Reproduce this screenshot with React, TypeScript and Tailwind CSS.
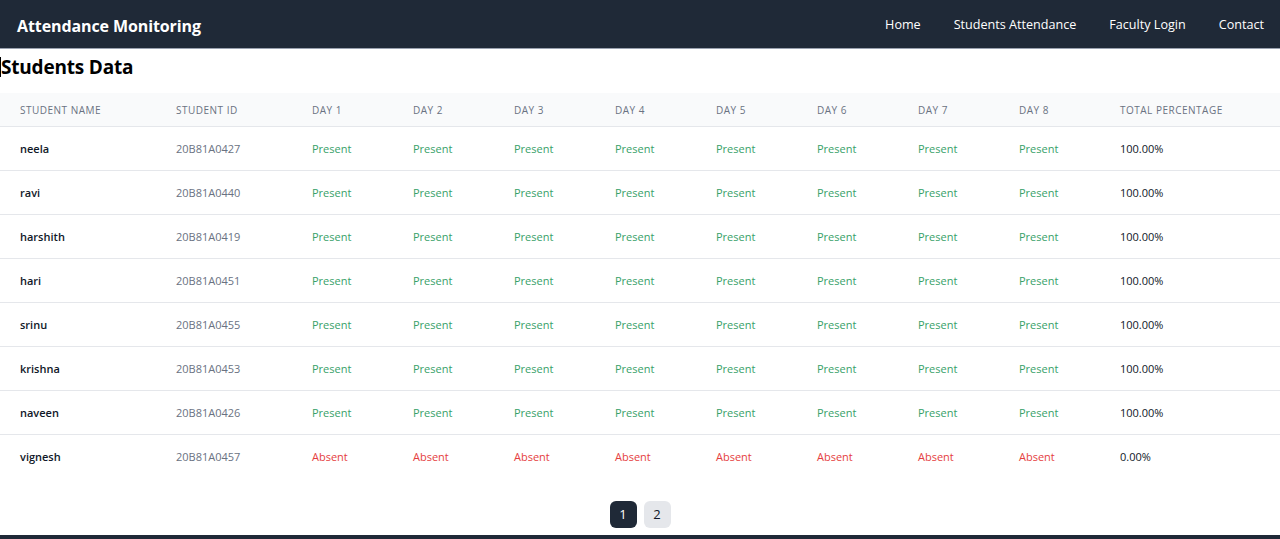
const days = ["Day 1", "Day 2", "Day 3", "Day 4", "Day 5", "Day 6", "Day 7", "Day 8"];

const students = [
  { name: "neela", id: "20B81A0427", present: true },
  { name: "ravi", id: "20B81A0440", present: true },
  { name: "harshith", id: "20B81A0419", present: true },
  { name: "hari", id: "20B81A0451", present: true },
  { name: "srinu", id: "20B81A0455", present: true },
  { name: "krishna", id: "20B81A0453", present: true },
  { name: "naveen", id: "20B81A0426", present: true },
  { name: "vignesh", id: "20B81A0457", present: false },
];

function Navbar() {
  return (
    <nav className="h-[49px] bg-[#1f2937] border-b border-gray-400 flex items-center justify-between pl-[17px] pr-[16px] pt-[3px]">
      <h1 className="text-white font-bold text-[16px] tracking-[-0.1px]">Attendance Monitoring</h1>
      <ul className="flex items-center gap-[33px] text-white text-[12.6px]">
        <li>Home</li>
        <li>Students Attendance</li>
        <li>Faculty Login</li>
        <li>Contact</li>
      </ul>
    </nav>
  );
}

export default function App() {
  return (
    <div className="min-h-[539px] flex flex-col bg-white" style={{ fontFamily: '"Open Sans", "Noto Sans", sans-serif' }}>
      <Navbar />
      <main className="flex-1">
        <div className="flex items-center h-[36px] mb-[2px]">
          <span className="inline-block w-px h-5 bg-black" />
          <h2 className="text-[19px] font-bold text-black tracking-[-0.2px]">Students Data</h2>
        </div>
        <table className="w-full table-fixed mt-[8px] text-[11px]">
          <colgroup>
            <col className="w-[156px]" />
            <col className="w-[136px]" />
            {days.map((d) => (
              <col key={d} className="w-[101px]" />
            ))}
            <col />
          </colgroup>
          <thead className="bg-gray-50">
            <tr className="h-[33px] border-b border-gray-200">
              <th className="px-5 pt-[2px] text-left text-[10px] font-medium text-gray-500 uppercase tracking-wider">Student Name</th>
              <th className="px-5 pt-[2px] text-left text-[10px] font-medium text-gray-500 uppercase tracking-wider">Student ID</th>
              {days.map((d) => (
                <th key={d} className="px-5 pt-[2px] text-left text-[10px] font-medium text-gray-500 uppercase tracking-wider">{d}</th>
              ))}
              <th className="px-5 pt-[2px] text-left text-[10px] font-medium text-gray-500 uppercase tracking-wider">Total Percentage</th>
            </tr>
          </thead>
          <tbody className="divide-y divide-gray-200">
            {students.map((s) => (
              <tr key={s.id} className="h-[44px]">
                <td className="px-5 pt-[2px] font-semibold text-gray-900">{s.name}</td>
                <td className="px-5 pt-[2px] text-gray-500">{s.id}</td>
                {days.map((d) => (
                  <td key={d} className={s.present ? "px-5 pt-[2px] text-[#38a169]" : "px-5 pt-[2px] text-[#e53e3e]"}>
                    {s.present ? "Present" : "Absent"}
                  </td>
                ))}
                <td className="px-5 pt-[2px] text-gray-900">{s.present ? "100.00%" : "0.00%"}</td>
              </tr>
            ))}
          </tbody>
        </table>
        <div className="flex justify-center gap-[7px] mt-[23px] mb-[6px]">
          <button className="w-[27px] h-[27px] rounded-md bg-[#1f2937] text-white text-[13px]">1</button>
          <button className="w-[27px] h-[27px] rounded-md bg-gray-200 text-gray-900 text-[13px]">2</button>
        </div>
      </main>
      <footer className="h-1 bg-[#1f2937]" />
    </div>
  );
}
